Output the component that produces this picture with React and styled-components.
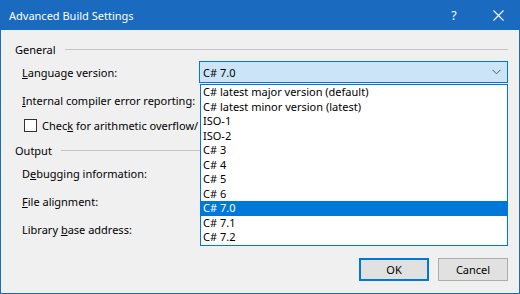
import styled, { createGlobalStyle } from "styled-components";

const GlobalStyle = createGlobalStyle`
  html, body {
    margin: 0;
    padding: 0;
    background: #ffffff;
  }
  body {
    font-family: "Noto Sans", "Liberation Sans", sans-serif;
    font-size: 11px;
    color: #000;
  }
`;

const Window = styled.div`
  position: relative;
  width: 520px;
  height: 294px;
  box-sizing: border-box;
  border: 1px solid #1a6ac0;
  border-top: none;
  background: #f0f0f0;
  display: flex;
  flex-direction: column;
`;

const TitleBar = styled.div`
  height: 30px;
  margin: 0 -1px;
  background: #1a6ac0;
  color: #fff;
  display: flex;
  align-items: center;
  padding-left: 9px;
  font-size: 11px;
`;

const Title = styled.div`
  flex: 1;
`;

const TitleButton = styled.div`
  width: 44px;
  height: 30px;
  display: flex;
  align-items: center;
  justify-content: center;
  font-size: 12.5px;
`;

const Content = styled.div`
  flex: 1;
  padding: 10px 11px 0 14px;
  display: flex;
  flex-direction: column;
`;

const GroupHeader = styled.div`
  height: 18px;
  display: flex;
  align-items: center;
  gap: 9px;
  margin-top: ${(p) => p.$top || 0}px;
  &::after {
    content: "";
    flex: 1;
    height: 1px;
    background: #c4c4c4;
  }
`;

const Row = styled.div`
  height: ${(p) => p.$h || 28}px;
  display: grid;
  grid-template-columns: 177px 1fr;
  align-items: center;
  padding-left: 7px;
`;

const Label = styled.div`
  white-space: nowrap;
`;

const Combo = styled.div`
  height: 22px;
  box-sizing: border-box;
  border: 1px solid ${(p) => (p.$open ? "#0078d7" : "#adadad")};
  background: ${(p) => (p.$open ? "#cce4f7" : "#e5e5e5")};
  display: flex;
  align-items: center;
  padding: 0 6px 0 3px;
`;

const ComboText = styled.div`
  flex: 1;
`;

const CheckRow = styled.label`
  display: flex;
  align-items: center;
  gap: 5px;
  padding-left: 2px;
  white-space: nowrap;
  overflow: hidden;
`;

const Box = styled.span`
  width: 13px;
  height: 13px;
  box-sizing: border-box;
  border: 1px solid #333;
  background: #fff;
  flex: none;
`;

const List = styled.div`
  position: absolute;
  top: 84px;
  left: 199px;
  width: 308px;
  box-sizing: border-box;
  border: 1px solid #0078d7;
  background: #fff;
  z-index: 2;
`;

const Item = styled.div`
  height: 14.5px;
  line-height: 14.5px;
  padding-left: 2px;
  white-space: nowrap;
  background: ${(p) => (p.$selected ? "#0078d7" : "transparent")};
  color: ${(p) => (p.$selected ? "#fff" : "#000")};
`;

const Footer = styled.div`
  display: flex;
  justify-content: flex-end;
  gap: 9px;
  padding: 0 11px 12px 0;
`;

const Button = styled.button`
  width: 70px;
  height: 23px;
  box-sizing: border-box;
  font-family: inherit;
  font-size: 11px;
  color: #000;
  background: #e1e1e1;
  border: ${(p) => (p.$default ? "2px solid #0078d7" : "1px solid #adadad")};
  padding: 0;
`;

const Chevron = () => (
  <svg width="9" height="6" viewBox="0 0 9 6">
    <path d="M0.5 0.8 L4.5 4.8 L8.5 0.8" fill="none" stroke="#555" strokeWidth="1" />
  </svg>
);

const CloseIcon = () => (
  <svg width="11" height="11" viewBox="0 0 11 11">
    <path d="M0.5 0.5 L10.5 10.5 M10.5 0.5 L0.5 10.5" stroke="#fff" strokeWidth="1.1" />
  </svg>
);

const versions = [
  "C# latest major version (default)",
  "C# latest minor version (latest)",
  "ISO-1",
  "ISO-2",
  "C# 3",
  "C# 4",
  "C# 5",
  "C# 6",
  "C# 7.0",
  "C# 7.1",
  "C# 7.2",
];

export default function App() {
  return (
    <>
      <GlobalStyle />
      <Window>
        <TitleBar>
          <Title>Advanced Build Settings</Title>
          <TitleButton>?</TitleButton>
          <TitleButton>
            <CloseIcon />
          </TitleButton>
        </TitleBar>

        <Content>
          <GroupHeader>General</GroupHeader>
          <Row>
            <Label>
              <u>L</u>anguage version:
            </Label>
            <Combo $open>
              <ComboText>C# 7.0</ComboText>
              <Chevron />
            </Combo>
          </Row>
          <Row>
            <Label>
              <u>I</u>nternal compiler error reporting:
            </Label>
          </Row>
          <Row $h={23}>
            <CheckRow>
              <Box />
              <span>
                Chec<u>k</u> for arithmetic overflow/
              </span>
            </CheckRow>
          </Row>

          <GroupHeader $top={4}>Output</GroupHeader>
          <Row>
            <Label>
              D<u>e</u>bugging information:
            </Label>
          </Row>
          <Row>
            <Label>
              <u>F</u>ile alignment:
            </Label>
          </Row>
          <Row>
            <Label>
              Library <u>b</u>ase address:
            </Label>
          </Row>
        </Content>

        <Footer>
          <Button $default>OK</Button>
          <Button>Cancel</Button>
        </Footer>

        <List>
          {versions.map((v) => (
            <Item key={v} $selected={v === "C# 7.0"}>
              {v}
            </Item>
          ))}
        </List>
      </Window>
    </>
  );
}
